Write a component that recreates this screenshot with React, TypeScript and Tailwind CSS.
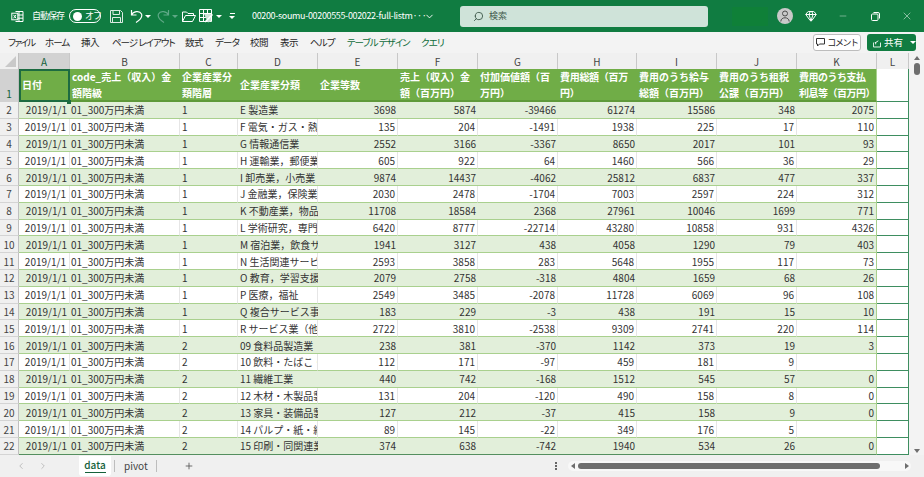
import { ChevronDown, ChevronLeft, ChevronRight, Gem, Minus, Plus, Search, X } from "lucide-react";

const font = '[font-family:"Noto_Sans_CJK_JP","Noto_Sans",sans-serif]';

const tabs = [
  { label: "ファイル", cls: "w-[37px] tracking-[-1.6px]" },
  { label: "ホーム", cls: "w-[36px] tracking-[-1px]" },
  { label: "挿入", cls: "w-[31px] tracking-[-0.5px]" },
  { label: "ページ レイアウト", cls: "w-[73px] tracking-[-1px]" },
  { label: "数式", cls: "w-[30px] tracking-[-0.5px]" },
  { label: "データ", cls: "w-[35px] tracking-[-0.8px]" },
  { label: "校閲", cls: "w-[30px] tracking-[-0.5px]" },
  { label: "表示", cls: "w-[30px] tracking-[-0.5px]" },
  { label: "ヘルプ", cls: "w-[37px] tracking-[-0.8px]" },
  { label: "テーブル デザイン", cls: "w-[74px] tracking-[-1px] text-[#0e6b3a]" },
  { label: "クエリ", cls: "w-[30px] tracking-[-0.8px] text-[#0e6b3a]" },
];
const columns = ["A", "B", "C", "D", "E", "F", "G", "H", "I", "J", "K", "L"];

const headers = [
  "日付",
  "code_売上（収入）金\n額階級",
  "企業産業分\n類階層",
  "企業産業分類",
  "企業等数",
  "売上（収入）金\n額（百万円）",
  "付加価値額（百\n万円）",
  "費用総額（百万\n円）",
  "費用のうち給与\n総額（百万円）",
  "費用のうち租税\n公課（百万円）",
  "費用のうち支払\n利息等（百万円）",
];

type Row = [number, string, number, number, number, number, number, number, number | ""];

const rows: Row[] = [
  [1, "E 製造業", 3698, 5874, -39466, 61274, 15586, 348, 2075],
  [1, "F 電気・ガス・熱供給", 135, 204, -1491, 1938, 225, 17, 110],
  [1, "G 情報通信業", 2552, 3166, -3367, 8650, 2017, 101, 93],
  [1, "H 運輸業，郵便業", 605, 922, 64, 1460, 566, 36, 29],
  [1, "I 卸売業，小売業", 9874, 14437, -4062, 25812, 6837, 477, 337],
  [1, "J 金融業，保険業", 2030, 2478, -1704, 7003, 2597, 224, 312],
  [1, "K 不動産業，物品賃貸業", 11708, 18584, 2368, 27961, 10046, 1699, 771],
  [1, "L 学術研究，専門・技術", 6420, 8777, -22714, 43280, 10858, 931, 4326],
  [1, "M 宿泊業，飲食サービス", 1941, 3127, 438, 4058, 1290, 79, 403],
  [1, "N 生活関連サービス業", 2593, 3858, 283, 5648, 1955, 117, 73],
  [1, "O 教育，学習支援業", 2079, 2758, -318, 4804, 1659, 68, 26],
  [1, "P 医療，福祉", 2549, 3485, -2078, 11728, 6069, 96, 108],
  [1, "Q 複合サービス事業", 183, 229, -3, 438, 191, 15, 10],
  [1, "R サービス業（他に分類", 2722, 3810, -2538, 9309, 2741, 220, 114],
  [2, "09 食料品製造業", 238, 381, -370, 1142, 373, 19, 3],
  [2, "10 飲料・たばこ・飼料", 112, 171, -97, 459, 181, 9, ""],
  [2, "11 繊維工業", 440, 742, -168, 1512, 545, 57, 0],
  [2, "12 木材・木製品製造業", 131, 204, -120, 490, 158, 8, 0],
  [2, "13 家具・装備品製造業", 127, 212, -37, 415, 158, 9, 0],
  [2, "14 パルプ・紙・紙加工", 89, 145, -22, 349, 176, 5, ""],
  [2, "15 印刷・同関連業", 374, 638, -742, 1940, 534, 26, 0],
];

function ExcelIcon() {
  return (
    <svg width="13" height="13" viewBox="0 0 13 13" fill="none" stroke="white" strokeWidth="1">
      <path d="M4.5 1.5h7.5v10H4.5M8 1.5v10M4.5 5h7.5M4.5 8.2h7.5" />
      <rect x="0.8" y="3.2" width="6" height="6.6" fill="#107c41" />
      <path d="M2.5 4.8l2.6 3.5M5.1 4.8l-2.6 3.5" />
    </svg>
  );
}

function SaveIcon() {
  return (
    <svg width="13" height="13" viewBox="0 0 13 13" fill="none" stroke="#dcebe3" strokeWidth="1">
      <path d="M.5.5h10l2 2v10H.5z" />
      <path d="M3 .5v4h6.5v-4M2.5 12.5v-5h8v5" />
    </svg>
  );
}

function UndoIcon({ dim }: { dim?: boolean }) {
  return (
    <svg
      width="13"
      height="14"
      viewBox="0 0 13 14"
      fill="none"
      stroke={dim ? "#5ea886" : "white"}
      strokeWidth="1.2"
      className={dim ? "-scale-x-100" : ""}
    >
      <path d="M1.5 1v5h5M1.5 6c1.5-3.5 8-5 10 -1 1.2 3-1.5 6-5.5 8.500" />
    </svg>
  );
}

function FolderIcon() {
  return (
    <svg width="14" height="11" viewBox="0 0 14 11" fill="none" stroke="white" strokeWidth="1">
      <path d="M.5 10.500V1h4l1.500 1.500h5.500v2M.5 10.500h10l3-6H3.500z" />
    </svg>
  );
}

function GridIcon() {
  return (
    <svg width="15" height="14" viewBox="0 0 15 14" fill="none" stroke="white" strokeWidth="1">
      <path d="M.5.5h12v12H.5zM.5 4.500h12M.5 8.500h12M4.500.5v12M8.500.5v12" />
      <path d="M5 5h7v7l-3 1.500z" fill="#cfe3d9" stroke="none" />
      <path d="M6 13l7.500-7.500" strokeWidth="1.500" />
    </svg>
  );
}

function Caret({ dim }: { dim?: boolean }) {
  return <span className={`block h-0 w-0 border-x-[3px] border-t-[3px] border-x-transparent ${dim ? "border-t-[#5ea886]" : "border-t-white"}`} />;
}

function TitleBar() {
  return (
    <div className="flex h-[32px] items-center whitespace-nowrap bg-[#107c41] text-white [&>*]:shrink-0">
      <div className="flex w-[32px] justify-center pl-[2px]">
        <ExcelIcon />
      </div>
      <span className="w-[37px] text-[9px] tracking-[-1px]">自動保存</span>
      <div className="flex h-[14px] w-[32px] items-center rounded-full border border-white pl-[3px]">
        <span className="h-[9px] w-[9px] shrink-0 rounded-full bg-white" />
        <span className="ml-[3px] text-[9px] tracking-[-1px]">オフ</span>
      </div>
      <div className="ml-[9px] flex w-[20px]">
        <SaveIcon />
      </div>
      <UndoIcon />
      <div className="ml-[2px] mr-[6px]">
        <Caret />
      </div>
      <UndoIcon dim />
      <div className="ml-[2px] mr-[4px]">
        <Caret dim />
      </div>
      <div className="mr-[3px]">
        <FolderIcon />
      </div>
      <GridIcon />
      <div className="ml-[2px] mr-[7px]">
        <Caret />
      </div>
      <div className="mr-[17px] flex w-[6px] flex-col items-center gap-[2px]">
        <span className="h-px w-[5px] bg-white" />
        <Caret />
      </div>
      <span className="w-[166px] text-[9px] tracking-[-0.35px]">00200-soumu-00200555-002022-full-listm···</span>
      <ChevronDown size={11} className="ml-[6px]" />
      <div className="ml-[25px] flex h-[21px] w-[248px] items-center rounded-[3px] bg-[#cfe3d9] pl-[13px] text-[#3f5a4c]">
        <Search size={11} className="-scale-x-100" />
        <span className="ml-[5px] text-[9px]">検索</span>
      </div>
      <div className="ml-[24px] h-[19px] w-[36px] bg-[#0f8038]" />
      <div className="ml-[9px] flex h-[16px] w-[16px] items-center justify-center rounded-full bg-[#c9c9c9]">
        <svg width="10" height="12" viewBox="0 0 10 12" fill="none" stroke="#4c4c4c" strokeWidth="1">
          <circle cx="5" cy="3.500" r="2.500" />
          <path d="M.8 11.500c0-5 8.400-5 8.400 0" />
        </svg>
      </div>
      <div className="ml-[10px] flex w-[16px] justify-center">
        <Gem size={12} />
      </div>
      <div className="ml-[17px] flex w-[14px] justify-center">
        <Minus size={10} strokeWidth={1} />
      </div>
      <div className="ml-[18px] flex w-[14px] justify-center">
        <svg width="9" height="9" viewBox="0 0 9 9" fill="none" stroke="white" strokeWidth="1">
          <rect x=".5" y="2" width="6.500" height="6.500" rx="1" />
          <path d="M2.500.5h4.500a1.500 1.500 0 0 1 1.500 1.500v4.500" />
        </svg>
      </div>
      <div className="ml-[18px] flex w-[14px] justify-center">
        <X size={12} strokeWidth={1} />
      </div>
    </div>
  );
}

function Ribbon() {
  return (
    <div className="flex h-[21px] items-center whitespace-nowrap bg-[#f3f3f3] pl-[8px] pr-[8px] text-[9.5px] text-[#262626]">
      <div className="flex [font-feature-settings:'palt']">
        {tabs.map((t) => (
          <span key={t.label} className={t.cls}>
            {t.label}
          </span>
        ))}
      </div>
      <div className="ml-auto flex h-[17px] w-[48px] shrink-0 items-center justify-center gap-[2px] rounded-[3px] border border-[#bdbdbd] bg-white text-[9px] tracking-[-1.4px]">
        <svg width="9" height="9" viewBox="0 0 9 9" fill="none" stroke="#333" strokeWidth="1">
          <path d="M.5.5h8v5.500h-5l-2 2v-2h-1z" />
        </svg>
        コメント
      </div>
      <div className="ml-[6px] flex h-[17px] w-[49px] shrink-0 items-center rounded-[3px] bg-[#107c41] pl-[6px] text-[9.5px] text-white">
        <svg width="9" height="10" viewBox="0 0 9 10" fill="none" stroke="white" strokeWidth="1">
          <path d="M.5 4.500v5h8v-5M2 4.500h1.500M6 2.500l-3 2v2" />
        </svg>
        <span className="ml-[3px]">共有</span>
        <div className="ml-[7px]">
          <Caret />
        </div>
      </div>
    </div>
  );
}

function ColumnHeaders() {
  return (
    <>
      <div className="flex items-end justify-end border-r border-[#bfbfbf] bg-[#f0f0f0] pb-[2px] pr-[2px]">
        <span className="h-0 w-0 border-b-[11px] border-l-[11px] border-b-[#c9c9c9] border-l-transparent" />
      </div>
      {columns.map((c, i) => (
        <div
          key={c}
          className={`flex items-center justify-center border-r border-[#c8c8c8] text-[10px] ${i === 0 ? "bg-[#d2d2d2] text-[#14613a]" : "bg-[#f0f0f0] text-[#444]"}`}
        >
          {c}
        </div>
      ))}
    </>
  );
}

function RowNumber({ n }: { n: number }) {
  return <div className="flex items-center justify-center border-r border-b border-r-[#bfbfbf] border-b-[#d4d4d4] bg-[#f0f0f0] text-[10px] text-[#444]">{n}</div>;
}

function HeaderRow() {
  return (
    <>
      <div className="flex items-end justify-center border-r border-[#bfbfbf] bg-[#d2d2d2] pb-[1px] text-[10px] text-[#14613a]">1</div>
      {headers.map((h, i) => (
        <div
          key={h}
          className={`flex items-center overflow-hidden whitespace-pre border-b-2 border-[#5f9a3a] bg-[#70ad47] pl-[2px] text-[10px] font-bold leading-[16px] text-white ${i === 0 ? "outline-2 -outline-offset-2 outline-[#1d6b41]" : ""} ${i === 10 ? "border-r border-r-[#a9d08e] tracking-[-0.5px]" : ""} ${i === 7 ? "tracking-[-0.3px]" : ""}`}
        >
          <span className={i === 0 ? "pl-[1px]" : ""}>{h}</span>
        </div>
      ))}
      <div className="border-b border-r border-[#3e8e60] bg-white" />
    </>
  );
}

function DataRow({ row, index }: { row: Row; index: number }) {
  const banded = index % 2 === 0;
  const last = index === rows.length - 1;
  const base = `overflow-hidden whitespace-nowrap flex items-center text-[10px] text-[#333] border-b ${last ? "border-b-[#548f5f]" : "border-b-[#a9d08e]"} ${banded ? "bg-[#e2efda]" : "bg-white border-r border-r-[#e6e6e6]"}`;
  const [level, name, ...numbers] = row;
  return (
    <>
      <RowNumber n={index + 2} />
      <div className={`${base} justify-end pr-[3px]`}>2019/1/1</div>
      <div className={`${base} pl-[1px]`}>01_300万円未満</div>
      <div className={`${base} pl-[2px]`}>{level}</div>
      <div className={`${base} pl-[2px]`}>{name}</div>
      {numbers.map((v, i) => (
        <div key={i} className={`${base} justify-end pr-[2px] ${i === numbers.length - 1 ? "!border-r !border-r-[#a9d08e]" : ""}`}>
          {v}
        </div>
      ))}
      <div className="border-b border-r border-[#3e8e60] bg-white" />
    </>
  );
}

function VerticalScrollbar() {
  return (
    <div className="flex w-[15px] flex-col items-center bg-[#f3f3f3] pt-[3px]">
      <span className="h-0 w-0 border-x-[3px] border-b-[4px] border-x-transparent border-b-[#6e6e6e]" />
      <span className="mt-[3px] h-[12px] w-[6px] rounded-full bg-[#6e6e6e]" />
      <span className="mt-auto mb-[2px] h-0 w-0 border-x-[3px] border-t-[4px] border-x-transparent border-t-[#6e6e6e]" />
    </div>
  );
}

function SheetTabs() {
  return (
    <div className="flex flex-1 items-center bg-[#f0f0f0] text-[10px] text-[#444] [&>*]:shrink-0">
      <ChevronLeft size={10} strokeWidth={1.500} className="ml-[16px] text-[#a0a0a0]" />
      <ChevronRight size={10} strokeWidth={1.500} className="ml-[12px] text-[#a0a0a0]" />
      <div className="ml-[31px] flex h-[20px] w-[32px] flex-col items-center justify-center rounded-b-[3px] bg-white font-medium text-[#14613a]">
        <span className="leading-[14px]">data</span>
        <span className="h-[1px] w-[21px] bg-[#14613a]" />
      </div>
      <span className="ml-[3px] h-[12px] w-px bg-[#bdbdbd]" />
      <span className="ml-[9px] w-[32px]">pivot</span>
      <span className="h-[12px] w-px bg-[#bdbdbd]" />
      <Plus size={10} className="ml-[27px] text-[#555]" />
      <span className="ml-[361px] flex flex-col gap-[1px]">
        <span className="h-[2px] w-[2px] bg-[#666]" />
        <span className="h-[2px] w-[2px] bg-[#666]" />
        <span className="h-[2px] w-[2px] bg-[#666]" />
      </span>
      <div className="ml-[11px] flex h-[10px] w-[343px] items-center rounded-full bg-[#f8f8f8] pl-[3px] pr-[2px]">
        <span className="h-0 w-0 border-y-[3px] border-r-[4px] border-y-transparent border-r-[#6e6e6e]" />
        <span className="ml-[3px] h-[6px] w-[302px] rounded-full bg-[#6e6e6e]" />
        <span className="ml-auto h-0 w-0 border-y-[3px] border-l-[4px] border-y-transparent border-l-[#6e6e6e]" />
      </div>
    </div>
  );
}

export default function App() {
  return (
    <div className={`flex h-[477px] w-[924px] flex-col overflow-hidden bg-[#f0f0f0] ${font}`}>
      <TitleBar />
      <Ribbon />
      <div className="flex">
        <div className="relative grid w-[909px] grid-cols-[19px_51px_110px_58px_80px_80px_80px_80px_79px_80px_80px_80px_32px] grid-rows-[16px_33px_repeat(21,16.8px)]">
          <ColumnHeaders />
          <HeaderRow />
          {rows.map((r, i) => (
            <DataRow key={i} row={r} index={i} />
          ))}
          <span className="absolute left-[67px] top-[47px] h-[4px] w-[4px] bg-[#1d6b41]" />
        </div>
        <VerticalScrollbar />
      </div>
      <SheetTabs />
    </div>
  );
}
